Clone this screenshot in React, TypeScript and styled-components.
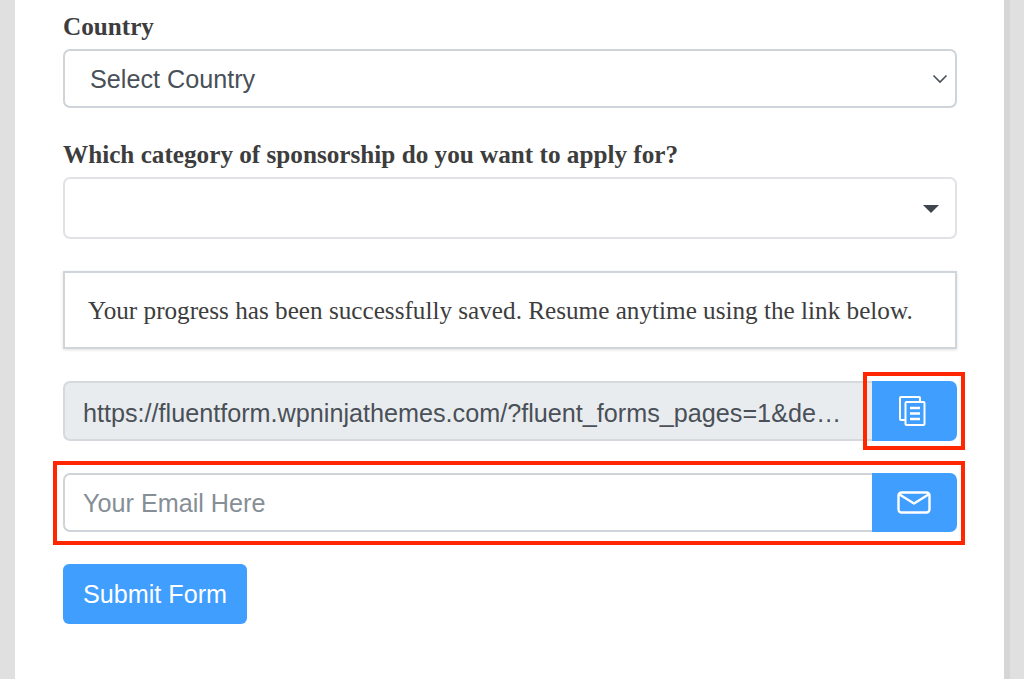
import React from 'react';
import styled, { createGlobalStyle } from 'styled-components';

const GlobalStyle = createGlobalStyle`
    html, body {
        margin: 0;
        height: 679px;
        overflow: hidden;
        background: #e0e0e0;
    }
    * {
        box-sizing: border-box;
    }
`;

const Page = styled.div`
    position: relative;
    width: 1024px;
    height: 679px;
    overflow: hidden;
    padding: 0 14px 0 15px;
`;

const Sheet = styled.div`
    height: 679px;
    background: #fff;
    border-right: 6px solid #d6d6d6;
    padding: 12px 47px 0 48px;
    width: 995px;
`;

const Field = styled.div`
    margin-bottom: 32px;
`;

const Label = styled.label`
    display: block;
    padding-top: 1px;
    font: bold 25.2px/28px 'Liberation Serif', serif;
    color: #3d3d3d;
    margin-bottom: 8px;
`;

const SelectBox = styled.div<{ $height: number; $border: string }>`
    height: ${p => p.$height}px;
    border: 2px solid ${p => p.$border};
    border-radius: 7px;
    background: #fff;
    display: flex;
    align-items: center;
    justify-content: space-between;
    padding: 1px 7px 0 25px;
    font: 25.2px 'Liberation Sans', sans-serif;
    color: #495057;
`;

const Caret = styled.span`
    width: 0;
    height: 0;
    margin-right: 9px;
    border-left: 8px solid transparent;
    border-right: 8px solid transparent;
    border-top: 8px solid #3f4650;
`;

const Notice = styled.div`
    height: 78px;
    border: 2px solid #d0d5dc;
    box-shadow: 0 1px 3px rgba(0, 0, 0, 0.12);
    display: flex;
    align-items: center;
    padding: 1px 24px 0 23px;
    margin-bottom: 32px;
    font: 25.2px 'Liberation Serif', serif;
    color: #3d3d3d;
    white-space: nowrap;
`;

const InputGroup = styled.div<{ $height: number }>`
    display: flex;
    height: ${p => p.$height}px;
    margin-bottom: 32px;
`;

const LinkField = styled.div`
    flex: 1;
    min-width: 0;
    background: #e9ecef;
    border: 2px solid #d5d9de;
    border-right: 0;
    border-radius: 7px 0 0 7px;
    padding: 0 24px 0 18px;
    font: 25.2px/60px 'Liberation Sans', sans-serif;
    color: #495057;
    white-space: nowrap;
    overflow: hidden;
    text-overflow: ellipsis;
`;

const EmailField = styled.div`
    flex: 1;
    min-width: 0;
    background: #fff;
    border: 2px solid #ced4da;
    border-right: 0;
    border-radius: 7px 0 0 7px;
    padding: 1px 18px 0;
    display: flex;
    align-items: center;
    font: 25.2px 'Liberation Sans', sans-serif;
    color: #868e96;
`;

const GroupButton = styled.div<{ $inset: number }>`
    width: 85px;
    flex: none;
    background: #409eff;
    border-radius: 0 7px 7px 0;
    display: flex;
    align-items: center;
    justify-content: center;
    padding-right: ${p => p.$inset}px;
`;

const SubmitButton = styled.button`
    display: block;
    width: 184px;
    height: 60px;
    padding: 0;
    background: #409eff;
    border: 0;
    border-radius: 6px;
    color: #fff;
    font: 25.2px 'Liberation Sans', sans-serif;
`;

const Annotation = styled.div<{ $left: number; $top: number; $width: number; $height: number }>`
    position: absolute;
    left: ${p => p.$left}px;
    top: ${p => p.$top}px;
    width: ${p => p.$width}px;
    height: ${p => p.$height}px;
    border: 4px solid #ff2600;
    pointer-events: none;
`;

function ChevronIcon() {
    return (
        <svg width="16" height="10" viewBox="0 0 16 10" fill="none" stroke="#495057" strokeWidth="1.6">
            <path d="M1.5 1.5 L8 8 L14.5 1.5" />
        </svg>
    );
}

function CopyIcon() {
    return (
        <svg width="27" height="30" viewBox="0 0 27 30" fill="none" stroke="#fff" strokeWidth="2" strokeLinejoin="round">
            <path d="M6 24 H2 a1 1 0 0 1 -1 -1 V2 a1 1 0 0 1 1 -1 H20 a1 1 0 0 1 1 1 V5" />
            <rect x="6.5" y="6" width="19" height="23" rx="1" fill="#409eff" />
            <path d="M11 12 H21 M11 17.500 H21 M11 23 H21" strokeWidth="2.400" />
        </svg>
    );
}

function MailIcon() {
    return (
        <svg width="34" height="23" viewBox="0 0 34 23" fill="none" stroke="#fff" strokeWidth="2.400" strokeLinejoin="round">
            <rect x="1.500" y="1.500" width="31" height="20" rx="3" />
            <path d="M2.500 3.500 L17 12.500 L31.500 3.500" />
        </svg>
    );
}

export default function App() {
    return (
        <>
            <GlobalStyle />
            <Page>
                <Sheet>
                    <Field>
                        <Label>Country</Label>
                        <SelectBox $height={59} $border="#ced4da">
                            Select Country
                            <ChevronIcon />
                        </SelectBox>
                    </Field>
                    <Field>
                        <Label>Which category of sponsorship do you want to apply for?</Label>
                        <SelectBox $height={62} $border="#e0e2e5">
                            <span />
                            <Caret />
                        </SelectBox>
                    </Field>
                    <Notice>Your progress has been successfully saved. Resume anytime using the link below.</Notice>
                    <InputGroup $height={60}>
                        <LinkField>https://fluentform.wpninjathemes.com/?fluent_forms_pages=1&amp;design_mode=yes</LinkField>
                        <GroupButton $inset={5}>
                            <CopyIcon />
                        </GroupButton>
                    </InputGroup>
                    <InputGroup $height={59}>
                        <EmailField>Your Email Here</EmailField>
                        <GroupButton $inset={2}>
                            <MailIcon />
                        </GroupButton>
                    </InputGroup>
                    <SubmitButton>Submit Form</SubmitButton>
                </Sheet>
                <Annotation $left={863} $top={372} $width={102} $height={78} />
                <Annotation $left={53} $top={461} $width={912} $height={84} />
            </Page>
        </>
    );
}
